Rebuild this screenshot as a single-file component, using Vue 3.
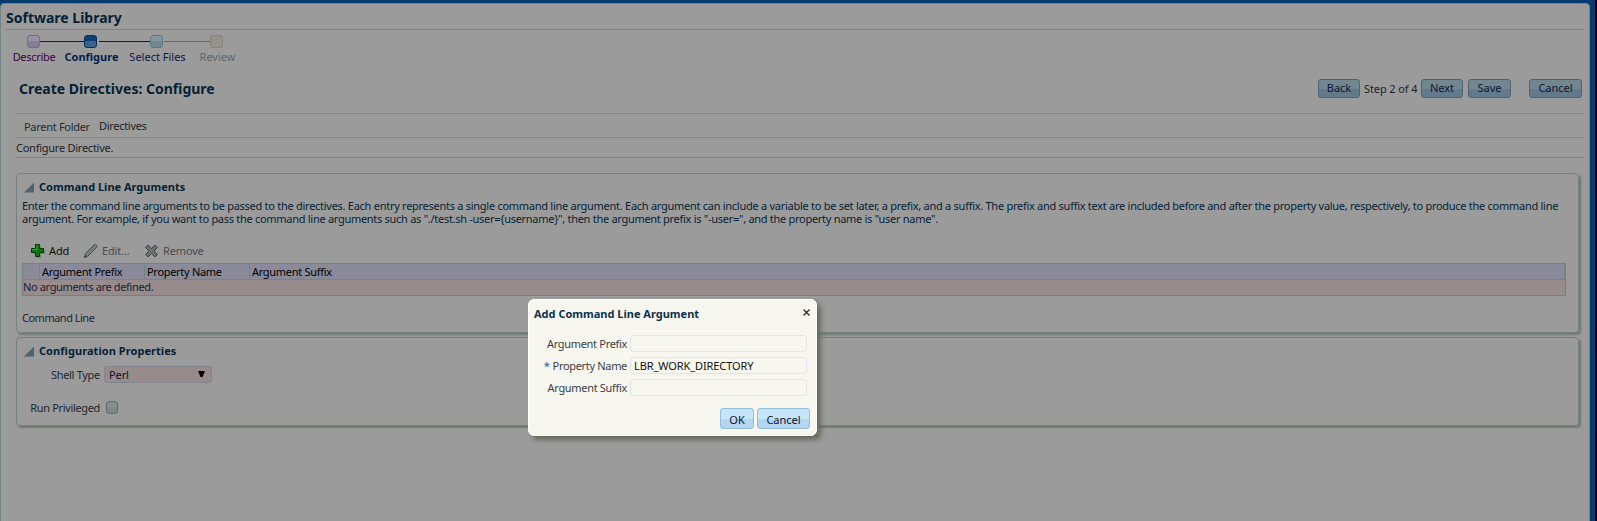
<template>
  <div class="shell">
    <div class="page">
      <h1 class="app-title">Software Library</h1>

      <div class="train">
        <div v-for="s in steps" :key="s.label" class="stop" :class="s.state">
          <i class="node"></i>
          <span>{{ s.label }}</span>
        </div>
      </div>

      <div class="title-row">
        <h2>Create Directives: Configure</h2>
        <div class="nav">
          <button class="btn back">Back</button>
          <span class="step">Step 2 of 4</span>
          <button class="btn next">Next</button>
          <button class="btn save">Save</button>
          <button class="btn cancel">Cancel</button>
        </div>
      </div>

      <div class="folder"><span class="lbl">Parent Folder</span><span>Directives</span></div>
      <div class="hint">Configure Directive.</div>

      <section class="panel args">
        <h3><i class="tri"></i>Command Line Arguments</h3>
        <p class="desc"><span class="first">{{ desc[0] }}</span><br><span>{{ desc[1] }}</span></p>
        <div class="toolbar">
          <span class="tool add">
            <svg width="16" height="16" viewBox="0 0 16 16">
              <path d="M7 3h4v4h4v4h-4v4H7v-4H3V7h4z" fill="#777d77" />
              <path d="M5.500 1.500h4v4h4v4h-4v4h-4v-4h-4v-4h4z" fill="#0a780a" stroke="#053805" />
              <path d="M7 2.500v4H2.500" fill="none" stroke="#4ba04b" />
            </svg>
            Add
          </span>
          <span class="tool edit off">
            <svg width="16" height="16" viewBox="0 0 16 16">
              <path d="M1.500 14.500l1-4 8.500-8.500q1.500-1 2.500 0t0 2.500l-8.500 8.500z" fill="#7b7e7e" stroke="#484b4b" />
              <path d="M1.500 14.500l.7-2.500 1.800 1.800z" fill="#333" />
            </svg>
            Edit...
          </span>
          <span class="tool remove off">
            <svg width="16" height="16" viewBox="0 0 16 16">
              <path d="M4 2l3.500 3.500L11 2l2.500 2.500L10 8l3.500 3.500L11 14l-3.500-3.500L4 14l-2.500-2.500L5 8 1.500 4.500z" fill="#6c7070" stroke="#404343" />
            </svg>
            Remove
          </span>
        </div>
        <div class="table">
          <div class="thead">
            <span></span>
            <span>Argument Prefix</span>
            <span>Property Name</span>
            <span>Argument Suffix</span>
          </div>
          <div class="empty">No arguments are defined.</div>
        </div>
        <div class="cmd">Command Line</div>
      </section>

      <section class="panel config">
        <h3><i class="tri"></i>Configuration Properties</h3>
        <div class="row shell-type">
          <label>Shell Type</label>
          <div class="select">Perl<svg width="7" height="7"><path d="M0 0h7L4.500 6h-2z" /></svg></div>
        </div>
        <div class="row priv">
          <label>Run Privileged</label>
          <i class="check"></i>
        </div>
      </section>
    </div>

    <div class="dialog">
      <header>
        Add Command Line Argument
        <svg width="7" height="7"><path d="M.5.5l6 6m0-6l-6 6" stroke="#222" stroke-width="1.200" /></svg>
      </header>
      <div v-for="f in fields" :key="f.label" class="field">
        <label><em v-if="f.required">*</em>{{ f.label }}</label>
        <div class="input">{{ f.value }}</div>
      </div>
      <footer>
        <button class="btn ok">OK</button>
        <button class="btn cancel">Cancel</button>
      </footer>
    </div>
  </div>
</template>

<script setup>
const steps = [
  { label: 'Describe', state: 'visited' },
  { label: 'Configure', state: 'current' },
  { label: 'Select Files', state: 'upcoming' },
  { label: 'Review', state: 'disabled' }
]
const desc = [
  'Enter the command line arguments to be passed to the directives. Each entry represents a single command line argument. Each argument can include a variable to be set later, a prefix, and a suffix. The prefix and suffix text are included before and after the property value, respectively, to produce the command line',
  'argument. For example, if you want to pass the command line arguments such as "./test.sh -user={username}", then the argument prefix is "-user=", and the property name is "user name".'
]
const fields = [
  { label: 'Argument Prefix', value: '' },
  { label: 'Property Name', value: 'LBR_WORK_DIRECTORY', required: true },
  { label: 'Argument Suffix', value: '' }
]
</script>

<style>
body { margin: 0; background: #000; overflow: hidden; }
</style>

<style scoped>
* { box-sizing: border-box; }
.shell {
  width: 1595px;
  height: 521px;
  padding: 3px 5px 0 0;
  background: #063b6e;
  font: 11px/13px "Noto Sans", sans-serif;
  letter-spacing: -0.3px;
  color: #1c1f24;
  overflow: hidden;
  white-space: nowrap;
}
.page {
  height: 530px;
  padding: 0 5px;
  border: 1px solid #748484;
  border-radius: 4px 4px 0 0;
  background: #9b9b9b;
}
h1, h2, h3, p { margin: 0; color: #061f35; }
h1, h2, h3 { letter-spacing: 0; }
.app-title {
  height: 26px;
  border-bottom: 1px solid #768786;
  font-size: 14px;
  line-height: 28px;
}

/* wizard steps */
.train { display: flex; height: 39px; padding: 5px 0 0 6px; }
.stop { position: relative; display: flex; flex-direction: column; align-items: center; }
.stop span { margin: 2px -2px 0 0; }
.node {
  width: 13px;
  height: 13px;
  border: 1px solid #776791;
  border-radius: 3px;
  background: linear-gradient(#9990a4 45%, #857d95 50%);
}
.visited { width: 42px; color: #440044; }
.current { width: 73px; color: #061e50; font-weight: bold; letter-spacing: 0; }
.upcoming { width: 59px; color: #06194d; letter-spacing: 0; }
.disabled { width: 61px; color: #626469; letter-spacing: 0; }
.current .node { border-color: #06305f; background: linear-gradient(#0b3f74 45%, #3b618d 50%); }
.upcoming .node { border-color: #5d7883; background: linear-gradient(#82969e 45%, #6f8891 50%); }
.disabled .node { border-color: #83837c; background: #93928b; }
.stop:not(.disabled)::after {
  content: "";
  position: absolute;
  top: 6px;
  left: calc(50% + 7px);
  width: 44px;
  height: 1px;
  background: #440044;
}
.stop.current::after { left: calc(50% + 8px); width: 51px; background: #061e50; }
.stop.upcoming::after { width: 47px; background: #5c6875; }

.title-row { display: flex; justify-content: space-between; height: 44px; padding: 10px 2px 0 13px; }
h2 { font-size: 14px; line-height: 20px; }
.nav { display: flex; align-items: flex-start; }
.btn {
  height: 19px;
  padding: 0;
  border: 1px solid #47656e;
  border-radius: 3px;
  background: linear-gradient(#738790 50%, #63798c 55%);
  color: #0d1730;
  font: inherit;
  text-align: center;
}
.nav .btn { padding-bottom: 2px; }
.nav .back, .nav .next { width: 42px; }
.nav .save { width: 43px; margin-left: 5px; }
.nav .cancel { width: 53px; margin-left: 18px; }
.step { width: 61px; padding-left: 4px; line-height: 20px; letter-spacing: -0.1px; }

.folder {
  display: flex;
  height: 25px;
  margin-left: 10px;
  padding: 5px 0 0 8px;
  border: solid #768786;
  border-width: 1px 0;
}
.folder .lbl { width: 75px; padding-top: 1px; color: #262c30; }
.hint {
  height: 20px;
  margin-left: 10px;
  padding-top: 3px;
  border-bottom: 1px solid #768786;
  line-height: 14px;
  letter-spacing: -0.25px;
}

.panel {
  margin: 15px 5px 0 10px;
  padding-left: 5px;
  border: 1px solid #74827f;
  border-radius: 4px;
  box-shadow: 2px 2px 2px #6f7770;
  color: #20262c;
}
.args { height: 160px; }
.config { height: 89px; margin-top: 4px; }
h3 { display: flex; align-items: center; gap: 5px; height: 25px; padding-left: 2px; font-size: 11px; }
.tri {
  width: 10px;
  height: 10px;
  margin-top: 2px;
  background: #50636e;
  clip-path: polygon(100% 0, 100% 100%, 0 100%);
}
.config h3 { letter-spacing: 0.06px; }
.desc { letter-spacing: -0.285px; }
.desc .first { letter-spacing: -0.272px; }
.toolbar { display: flex; height: 38px; padding: 17px 0 0 8px; letter-spacing: -0.15px; }
.tool { display: flex; height: 17px; align-items: center; gap: 3px; color: #101010; }
.add { width: 53px; }
.edit { width: 61px; }
.off { color: #464b50; }

.table { width: 1544px; border: 1px solid #747f86; }
.thead {
  display: grid;
  grid-template-columns: 17px 105px 105px 1fr;
  height: 16px;
  border-bottom: 1px solid #748489;
  background: #8b8a9a;
  color: #000;
}
.thead span { padding-left: 2px; border-right: 1px solid #748489; line-height: 16px; }
.empty { height: 15px; background: #978b8b; color: #152238; line-height: 14px; letter-spacing: -0.36px; }
.cmd { margin-top: 15px; letter-spacing: -0.5px; }

.row { display: flex; align-items: center; gap: 4px; }
.row label { width: 78px; text-align: right; }
.select {
  display: flex;
  align-items: center;
  justify-content: space-between;
  width: 108px;
  height: 17px;
  padding: 0 6px 0 4px;
  border: 1px solid #80848c;
  border-radius: 3px;
  background: #978b8b;
  color: #0a1628;
  letter-spacing: -0.1px;
}
.shell-type { height: 17px; margin-top: 3px; }
.priv { margin-top: 18px; gap: 6px; }
.priv label { letter-spacing: -0.35px; }
.priv .check {
  width: 12px;
  height: 13px;
  border: 1px solid #626b72;
  border-radius: 3px;
  background: linear-gradient(#8a9191, #7c8486);
}

.dialog {
  position: absolute;
  left: 528px;
  top: 299px;
  width: 289px;
  height: 137px;
  padding: 7px 6px 0 5px;
  border: 1px solid #fff;
  border-radius: 6px;
  background: #f8f7ef;
  box-shadow: 4px 4px 5px #676a5e;
  color: #3a3f45;
}
.dialog header {
  display: flex;
  justify-content: space-between;
  height: 28px;
  color: #0b3150;
  font-weight: bold;
  letter-spacing: 0;
}
.dialog header svg { margin-top: 2px; }
.field { display: flex; gap: 3px; height: 22px; padding-right: 3px; justify-content: flex-end; }
.field label { line-height: 17px; text-align: right; letter-spacing: -0.32px; }
.field em { margin-right: 3px; color: #1f5c9c; font-style: normal; }
.input {
  width: 177px;
  height: 17px;
  padding-left: 3px;
  border: 1px solid #e3e3ea;
  border-radius: 3px;
  color: #111;
  line-height: 15px;
  letter-spacing: -0.1px;
}
.dialog footer { display: flex; justify-content: flex-end; gap: 3px; margin-top: 7px; }
.dialog .btn {
  height: 21px;
  border-color: #93bddc;
  background: linear-gradient(#c6e5f8 50%, #b4d6f1 55%);
  line-height: 21px;
}
.ok { width: 34px; }
.dialog .cancel { width: 53px; }
</style>
